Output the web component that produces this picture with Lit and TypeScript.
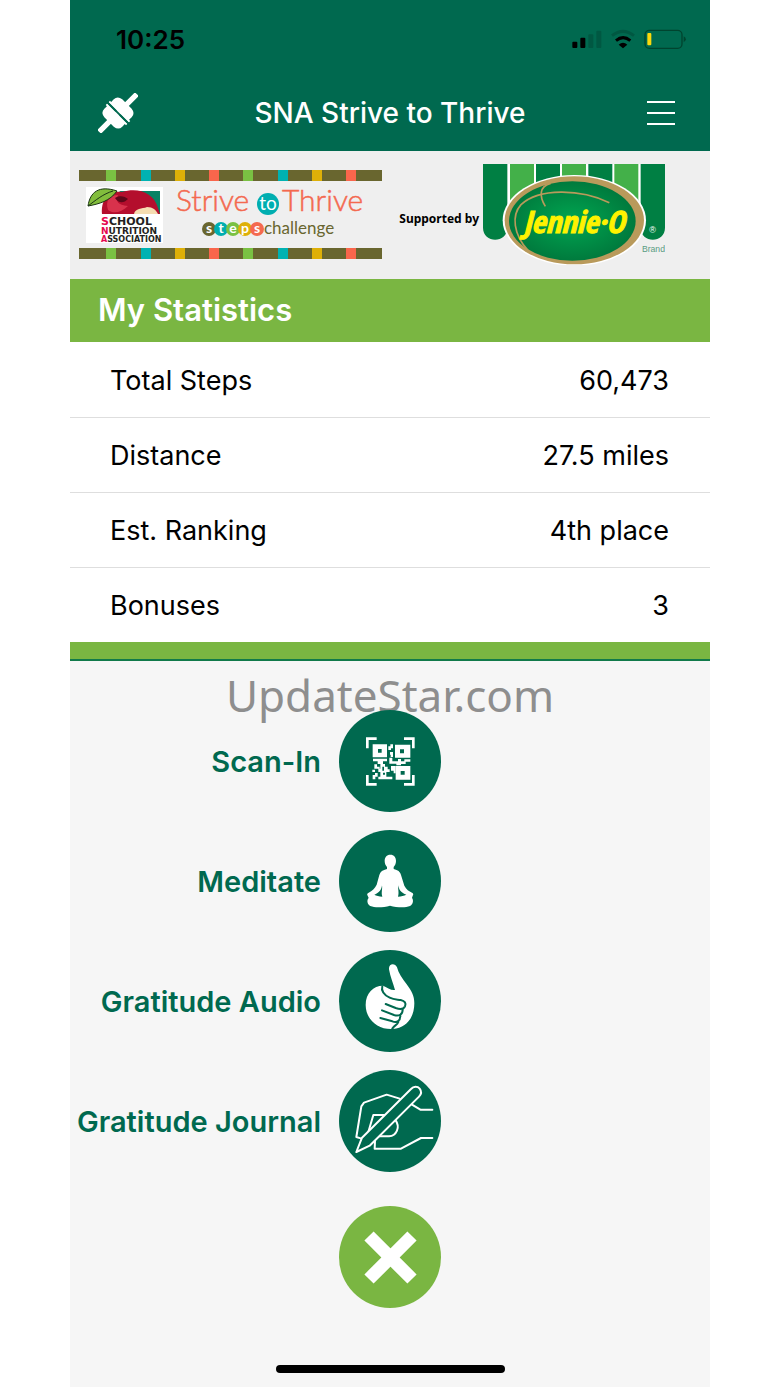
import { LitElement, html, css, svg } from "lit";
import { customElement } from "lit/decorators.js";

const GREEN = "#00694f";

const stats = [
  { label: "Total Steps", value: "60,473" },
  { label: "Distance", value: "27.5 miles" },
  { label: "Est. Ranking", value: "4th place" },
  { label: "Bonuses", value: "3" },
];

const stripeColors = ["#7ac143", "#00b2b2", "#deb008", "#f9664c"];
const stripes = [106, 141, 175, 209, 243, 278, 312, 346];

const scanIcon = svg`
  <svg viewBox="28 30 306 306" aria-hidden="true">
    <g fill="none" stroke="#fff" stroke-width="8">
      <path d="M113 145V116H141M223 116H251V145M251 225V253H223M141 253H113V225"/>
    </g>
    <path fill="#fff" fill-rule="evenodd" d="M129 133H172V172H129ZM145 147V158H156V147ZM196 134H242V173H196ZM211 148V160H223V148ZM198 198H242V239H198ZM213 213V224H225V213Z"/>
    <path fill="#fff" d="M176 139H182V133H190V145H184V150H176ZM181 156H190V171H183V164H181ZM130 176H172V184H160V192H166V200H174V208H180V216H170V230H188V238H146V230H152V216H146V206H152V192H144V184H130ZM179 173H188V184H205V177H214V184H224V178H242V185H228V192H214V196H200V191H179ZM134 193H142V200H150V206H134ZM128 209H136V216H128ZM184 198H198V220H192V212H184ZM129 225H136V219H144V230H137V238H129Z"/>
    <path fill="${GREEN}" d="M158 200H163V212H158ZM160 218H166V224H160Z"/>
  </svg>`;

const meditateIcon = svg`
  <svg viewBox="28 30 306 306" aria-hidden="true">
    <path fill="#fff" d="M182 104C193 104 199 112 199 123C199 131 196 137 192 141V147C205 150 211 155 214 165L224 197C230 208 238 214 247 218C251 220 252 224 249 227L247 234C252 240 251 253 241 258C226 264 201 262 181 257C162 262 137 264 122 258C112 253 111 240 117 234L114 227C111 223 113 220 117 218C127 213 136 205 141 194L149 165C152 155 159 150 172 147V141C168 137 165 131 165 123C165 112 171 104 182 104Z"/>
    <path fill="${GREEN}" d="M157 196C156 209 148 219 134 224C140 227 148 229 158 230C154 217 159 208 157 196ZM206 196C207 209 215 219 230 224C223 227 215 229 205 230C209 217 204 208 206 196Z"/>
  </svg>`;

const thumbIcon = svg`
  <svg viewBox="28 28 306 306" aria-hidden="true">
    <path fill="#fff" d="M178 86C176 68 196 65 202 80C206 98 218 113 231 131C246 151 254 165 254 188C254 232 229 262 190 265C144 268 108 236 108 193C108 157 131 135 160 135C171 140 185 150 196 148C190 126 182 110 178 86Z"/>
    <g fill="none" stroke="${GREEN}" stroke-width="6" stroke-linecap="round" stroke-linejoin="round">
      <path d="M158 137C154 149 162 163 180 171C194 178 204 176 213 178C226 181 230 188 226 197C221 207 209 206 198 202L168 190"/>
      <path d="M219 205C220 222 207 228 193 223L157 209"/>
      <path d="M212 225C212 241 202 247 188 242L152 232M206 244C202 254 196 252 188 264"/>
    </g>
  </svg>`;

const journalIcon = svg`
  <svg viewBox="28 27 306 306" aria-hidden="true">
    <g fill="none" stroke="#fff" stroke-width="6" stroke-linejoin="round" stroke-linecap="round">
      <path d="M210 113L171 101L103 125L95 136L80 228L93 232"/>
      <path d="M116 213L131 162H166"/>
      <path d="M149 226H178C201 224 212 198 198 178"/>
      <path d="M247 131L272 146H308"/>
      <path d="M136 239L135 263H214L274 231H308"/>
      <path fill="${GREEN}" d="M80 273L97 230L244 84C252 75 264 76 270 83C276 91 275 100 268 107L120 254Z"/>
    </g>
  </svg>`;

const actions = [
  { label: "Scan-In", icon: scanIcon },
  { label: "Meditate", icon: meditateIcon },
  { label: "Gratitude Audio", icon: thumbIcon },
  { label: "Gratitude Journal", icon: journalIcon },
];

@customElement("app-root")
export class AppRoot extends LitElement {
  static styles = css`
    :host {
      display: block;
      background: #fff;
      color: #000;
      font-family: Inter, "Liberation Sans", sans-serif;
    }
    * {
      box-sizing: border-box;
    }
    svg {
      display: block;
      flex: none;
    }
    button {
      padding: 0;
      border: 0;
      background: none;
      font: inherit;
      color: inherit;
      cursor: pointer;
    }
    .phone {
      display: flex;
      flex-direction: column;
      max-width: 640px;
      min-height: 100vh;
      margin: 0 auto;
      background: #f6f6f6;
    }
    .top {
      background: #00694f;
      height: 151px;
    }
    .status {
      display: flex;
      align-items: center;
      justify-content: space-between;
      height: 76px;
      padding: 2px 23px 0 46px;
      font-size: 26px;
      font-weight: 600;
    }
    .signals {
      width: 115px;
      height: 20px;
    }
    .nav {
      display: grid;
      grid-template-columns: 1fr auto 1fr;
      align-items: center;
      height: 73px;
      padding: 0 28px;
      color: #fff;
    }
    .nav h1 {
      margin: 0;
      font-size: 28px;
      font-weight: 500;
    }
    .plug {
      width: 40px;
      height: 40px;
    }
    .menu {
      justify-self: end;
      padding: 8px 7px;
    }
    .menu svg {
      width: 28px;
      height: 24px;
    }
    .banner {
      display: flex;
      align-items: center;
      gap: 4px;
      height: 128px;
      padding: 0 45px 2px 9px;
      background: #efefef;
    }
    .supported {
      margin-left: auto;
      padding-top: 8px;
      font: 700 12px "Noto Sans", "Open Sans", sans-serif;
      white-space: nowrap;
    }
    .challenge {
      width: 303px;
      height: 89px;
    }
    .jennie {
      width: 182px;
      height: 101px;
    }
    .band {
      margin: 0;
      padding: 0 28px 2px;
      background: #7ab642;
      color: #fff;
      font-size: 31px;
      font-weight: 600;
      line-height: 61px;
    }
    .stats {
      width: 100%;
      border-collapse: collapse;
      background: #fff;
      font-size: 27px;
      line-height: 32px;
    }
    .stats th,
    .stats td {
      height: 75px;
      padding: 3px 41px 0 40px;
      font-weight: 400;
      text-align: left;
    }
    .stats td {
      text-align: right;
    }
    .stats tr + tr {
      border-top: 1px solid #dedede;
    }
    .rule {
      height: 19px;
      background: #7ab642;
      border-bottom: 2px solid #117a4a;
    }
    .actions {
      position: relative;
      padding: 49px 0 34px;
    }
    .watermark {
      position: absolute;
      top: 4px;
      left: 0;
      right: 0;
      margin: 0;
      text-align: center;
      color: #8e8e8e;
      font: 400 44px/60px "Noto Sans", "Open Sans", sans-serif;
    }
    .list {
      position: relative;
      display: grid;
      gap: 18px;
      margin: 0;
      padding: 0;
      list-style: none;
    }
    .action {
      display: grid;
      grid-template-columns: minmax(0, 1fr) 102px minmax(0, 1fr);
      column-gap: 18px;
      align-items: center;
      width: 100%;
      color: #00694f;
      font-size: 29px;
      font-weight: 600;
      line-height: 36px;
      text-align: right;
    }
    .label {
      padding-top: 2px;
      white-space: nowrap;
      justify-self: end;
    }
    .disc {
      width: 102px;
      height: 102px;
      border-radius: 50%;
      background: #00694f;
    }
    .close {
      display: block;
      margin: 0 auto;
      background: #7ab642;
    }
    .home {
      width: 229px;
      height: 8px;
      margin: auto auto 14px;
      border-radius: 4px;
      background: #000;
    }
  `;

  private challengeLogo() {
    return html`
      <svg class="challenge" viewBox="79 170 303 89" role="img" aria-label="Strive to Thrive steps challenge">
        <path fill="#69662f" d="M79 170H382V181H79ZM79 248H382V259H79Z" />
        ${stripes.map(
          (x, i) => svg`<path fill="${stripeColors[i % 4]}" d="M${x} 170h10v11h-10zM${x} 248h10v11h-10z"/>`
        )}
        <path fill="#fff" d="M86 187H163V243H86Z" />
        <path fill="#078264" d="M119 191H160V214H150Z" />
        <path fill="#b40e2d" d="M102 214C101 201 107 190 122 192C137 187 154 192 158 208L160 214Z" />
        <path fill="#d8324c" d="M108 210C105 200 110 195 118 195C115 201 118 205 128 206C121 213 113 214 108 210Z" />
        <path fill="#5e0719" d="M115 198C119 195 125 196 128 199C124 203 119 204 115 198Z" />
        <path fill="#f5ddb2" d="M134 214C135 208 142 209 147 207C153 207 156 210 158 214Z" />
        <path fill="#82bd3c" stroke="#1b3515" d="M88 206C90 192 99 185 117 191C110 201 99 204 88 206ZM88 206C96 200 103 194 113 191" />
        <g font-family="DejaVu Sans, sans-serif" font-weight="700" fill="#231f20">
          <text x="101" y="225" font-size="11"><tspan fill="#e5094f">S</tspan>CHOOL</text>
          <text x="101" y="234" font-size="9"><tspan fill="#e5094f">N</tspan>UTRITION</text>
          <text x="101" y="242" font-size="8"><tspan fill="#e5094f">A</tspan>SSOCIATION</text>
        </g>
        <circle cx="268" cy="204" r="11" fill="#00aeb0" />
        <g font-family="Lato, sans-serif">
          <g font-size="30" font-weight="300" fill="#f4694f" stroke="#f4694f" stroke-width=".5">
            <text x="176" y="211">Strive</text>
            <text x="282" y="211">Thrive</text>
          </g>
          <text x="268" y="210" font-size="19" text-anchor="middle" fill="#fff">to</text>
          <circle cx="209" cy="229" r="7" fill="#69662f" />
          <circle cx="221" cy="229" r="7" fill="#00aeb0" />
          <circle cx="233" cy="229" r="7" fill="#7ac143" />
          <circle cx="245" cy="229" r="7" fill="#deb008" />
          <circle cx="257" cy="229" r="7" fill="#f4694f" />
          <g font-size="14" font-weight="700" fill="#fff" text-anchor="middle">
            <text x="209" y="233">s</text>
            <text x="221" y="233">t</text>
            <text x="233" y="233">e</text>
            <text x="245" y="233">p</text>
            <text x="257" y="233">s</text>
          </g>
          <text x="264" y="234" font-size="17" fill="#69662f">challenge</text>
        </g>
      </svg>
    `;
  }

  private jennieLogo() {
    return html`
      <svg class="jennie" viewBox="279 41 546 303" role="img" aria-label="Jennie-O Brand">
        <defs>
          <radialGradient id="oval">
            <stop offset="0" stop-color="#00a651" />
            <stop offset="1" stop-color="#007a3d" />
          </radialGradient>
        </defs>
        <path fill="#fff" d="M352 41H752V200H352Z" />
        <path fill="#007f43" d="M279 41H352V232C352 280 279 280 279 232ZM438 41H510V120H438ZM595 41H667V120H595ZM752 41H825V232C825 280 752 280 752 232Z" />
        <path fill="#43b049" d="M360 41H432V200H360ZM516 41H588V120H516ZM673 41H745V200H673Z" />
        <ellipse cx="553" cy="210" rx="215" ry="136" fill="#fff" />
        <ellipse cx="553" cy="210" rx="209" ry="132" fill="#b99a5b" />
        <ellipse cx="547" cy="212" rx="190" ry="119" fill="url(#oval)" />
        <g fill="none" stroke="#b99a5b" stroke-width="5">
          <path d="M482 99C448 108 447 137 466 168" />
          <path d="M658 157C570 115 447 113 393 163C364 195 370 253 414 300" />
        </g>
        <text x="552" y="247" text-anchor="middle" fill="#fff200" stroke="#fff200" stroke-width="3" font-family="Liberation Sans Narrow, Open Sans Condensed, Lato, sans-serif" font-size="92" font-weight="900" font-style="italic">Jennie·O</text>
        <text x="788" y="249" text-anchor="middle" fill="#fff" font-family="Liberation Sans, sans-serif" font-size="27">®</text>
        <text x="825" y="305" text-anchor="end" fill="#5a9c83" font-family="Liberation Sans, sans-serif" font-size="26">Brand</text>
      </svg>
    `;
  }

  render() {
    return html`
      <main class="phone">
        <header class="top">
          <div class="status">
            <span>10:25</span>
            <svg class="signals" viewBox="545 88 345 60" aria-hidden="true">
              <rect x="546" y="126" width="15" height="19" rx="3" />
              <rect x="570" y="114" width="15" height="31" rx="3" />
              <rect x="594" y="104" width="15" height="41" rx="3" fill="#005842" />
              <rect x="618" y="93" width="15" height="52" rx="3" fill="#005842" />
              <g fill="none" stroke-width="9">
                <path stroke="#005842" d="M665 108Q698 82 731 108" />
                <path stroke="#000" d="M677 123Q698 105 720 123" />
              </g>
              <path d="M685 135Q698 124 711 135L698 146Z" />
              <rect x="764" y="92" width="111" height="54" rx="13" fill="none" stroke="#00442f" stroke-width="4" />
              <rect x="771" y="100" width="12" height="37" rx="3" fill="#fcd90b" />
              <path fill="#00442f" d="M880 110Q893 118 880 128Z" />
            </svg>
          </div>
          <div class="nav">
            <button class="plug" aria-label="Connect device">
              <svg width="40" height="40" viewBox="83 278 120 120" aria-hidden="true">
                <g transform="translate(143 338) rotate(45)" fill="#fff">
                  <rect x="-8" y="-80" width="16" height="160" rx="4" />
                  <path d="M-43-9H-38V-20Q-38-36-20-38H20Q38-36 38-20V-9H43V-3H-43Z" />
                  <path d="M-43 9H-38V20Q-38 36-20 38H20Q38 36 38 20V9H43V3H-43Z" />
                  <rect x="-44" y="-3" width="88" height="6" fill="#00694f" />
                </g>
              </svg>
            </button>
            <h1>SNA Strive to Thrive</h1>
            <button class="menu" aria-label="Menu">
              <svg viewBox="0 0 28 24" aria-hidden="true">
                <path fill="#fff" d="M0 0h28v2H0zM0 11h28v2H0zM0 22h28v2H0z" />
              </svg>
            </button>
          </div>
        </header>
        <section class="banner">
          ${this.challengeLogo()}
          <span class="supported">Supported by</span>
          ${this.jennieLogo()}
        </section>
        <h2 class="band">My Statistics</h2>
        <table class="stats">
          <tbody>
            ${stats.map(
              (s) => html`<tr><th scope="row">${s.label}</th><td>${s.value}</td></tr>`
            )}
          </tbody>
        </table>
        <div class="rule"></div>
        <section class="actions">
          <p class="watermark">UpdateStar.com</p>
          <ul class="list">
            ${actions.map(
              (a) => html`
                <li>
                  <button class="action">
                    <span class="label">${a.label}</span>
                    <span class="disc">${a.icon}</span>
                  </button>
                </li>
              `
            )}
          </ul>
        </section>
        <button class="disc close" aria-label="Close">
          <svg width="102" height="102" viewBox="0 0 102 102" aria-hidden="true">
            <path d="M30 30L73 73M73 30L30 73" stroke="#fff" stroke-width="13" />
          </svg>
        </button>
        <div class="home"></div>
      </main>
    `;
  }
}
